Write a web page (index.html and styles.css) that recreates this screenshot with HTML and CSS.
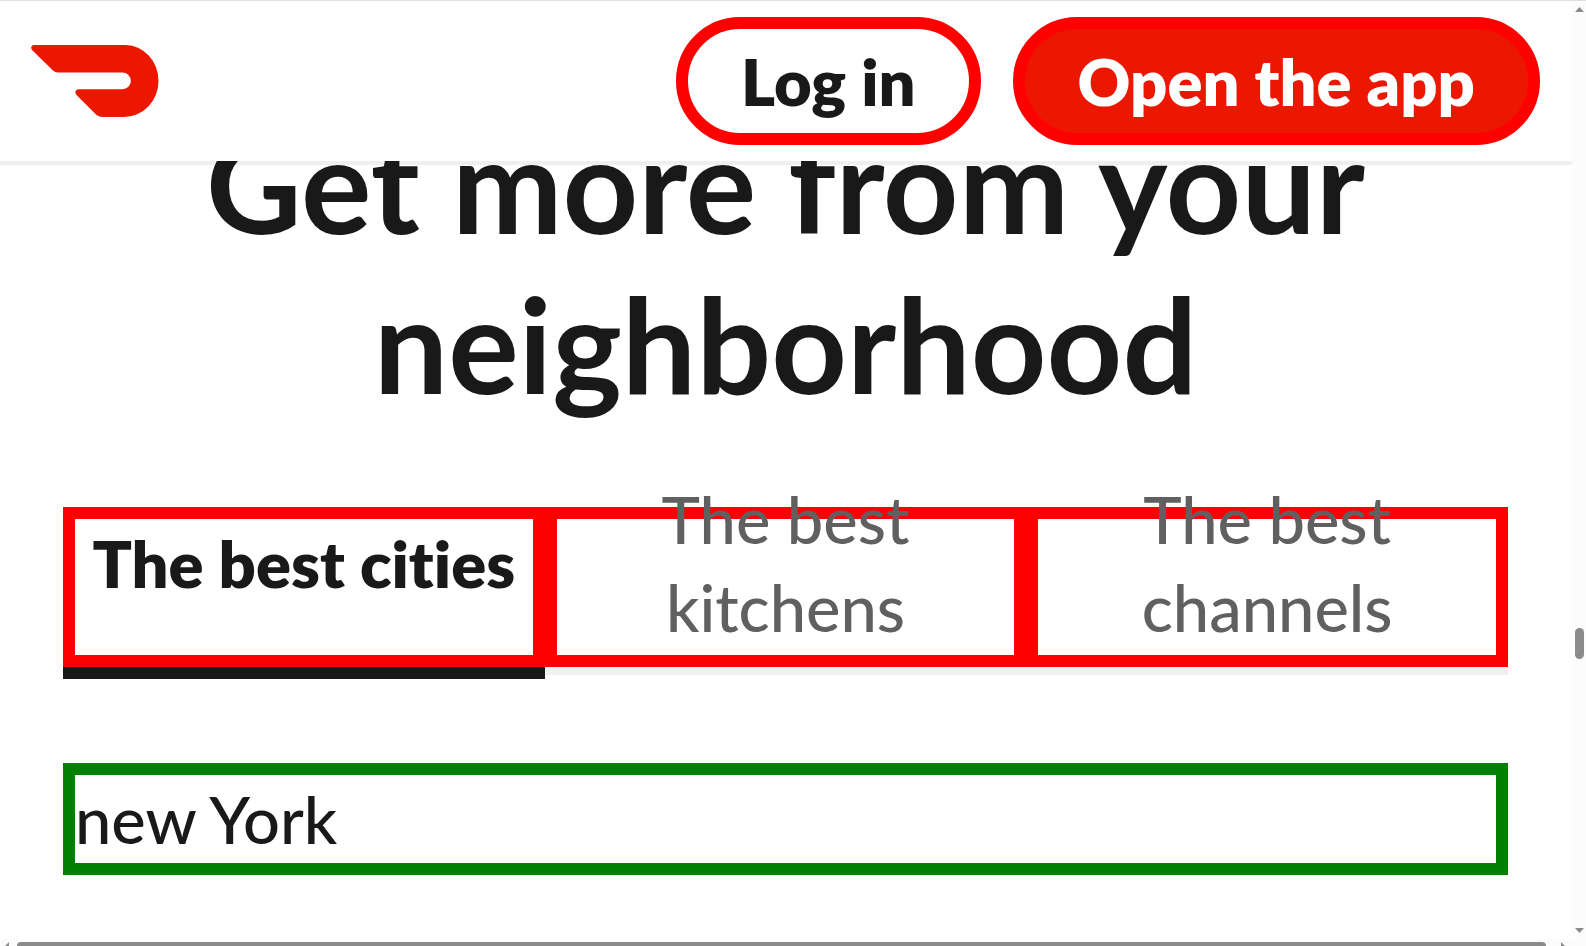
FILE: index.html
```html
<!DOCTYPE html>
<html lang="en">
<head>
<meta charset="utf-8">
<title>Get more from your neighborhood</title>
<link rel="stylesheet" href="styles.css">
</head>
<body>
<div class="window">
  <div class="page">
    <header class="header">
      <a class="logo" href="#" aria-label="Home">
        <svg viewBox="0 0 128 72" aria-hidden="true"><path d="M3 0H95A33 36 0 0 1 127.500 36A34.500 36 0 0 1 93 72H72Q68 72 65.500 70L45.500 50Q43.500 47.500 45 45.500Q46 44.300 48 44.300H91.500A8.200 8.200 0 0 0 91.500 27.600H27Q24 27.600 22 25.500L1 5Q-.5 3 .8 1Q1.500 0 3 0Z"/></svg>
      </a>
      <nav class="actions">
        <button class="pill" type="button">Log in</button>
        <button class="pill pill-primary" type="button">Open the app</button>
      </nav>
    </header>
    <main class="content">
      <h1 class="title">Get more from your neighborhood</h1>
      <div class="tabs" role="tablist">
        <button class="tab tab-active" type="button" role="tab" aria-selected="true"><span>The best cities</span></button>
        <button class="tab" type="button" role="tab" aria-selected="false"><span>The best kitchens</span></button>
        <button class="tab" type="button" role="tab" aria-selected="false"><span>The best channels</span></button>
      </div>
      <a class="city" href="#">new York</a>
    </main>
  </div>
  <div class="scroll-y" aria-hidden="true">
    <svg class="arrow-y" viewBox="0 0 9 5"><path d="M0 5L4.500 0L9 5Z"/></svg>
    <div class="thumb-y"></div>
    <svg class="arrow-y" viewBox="0 0 9 5"><path d="M0 0L4.500 5L9 0Z"/></svg>
  </div>
  <div class="scroll-x" aria-hidden="true">
    <svg class="arrow-x" viewBox="0 0 4 4"><path d="M4 0V4H0Z"/></svg>
    <div class="thumb-x"></div>
    <svg class="arrow-x" viewBox="0 0 4 4"><path d="M0 0V4H4Z"/></svg>
  </div>
</div>
</body>
</html>
```
FILE: styles.css
```css
* { box-sizing: border-box; }

body {
  margin: 0;
  background: #fff;
  color: #191919;
  font-family: Lato, "Open Sans", sans-serif;
  font-size: 65px;
  font-weight: 500;
  font-variant-ligatures: none;
  line-height: 88px;
}

button {
  margin: 0;
  color: inherit;
  font: inherit;
  font-variant-ligatures: none;
  cursor: pointer;
}

a { color: inherit; text-decoration: none; }

.window {
  display: grid;
  grid-template-columns: minmax(0, 1fr) 14px;
  grid-template-rows: minmax(0, 1fr) 7px;
  height: 100vh;
  border-top: 1px solid #e0e0e0;
  overflow: hidden;
}

.page { overflow: hidden; }

.header {
  position: relative;
  z-index: 1;
  display: flex;
  align-items: center;
  justify-content: space-between;
  padding: 16px 32px 16px 31px;
  background: #fff;
  box-shadow: 0 4px 0 rgba(25, 25, 25, 0.07);
}

.logo { display: flex; }
.logo svg { width: 128px; height: 72px; fill: #eb1700; }

.actions { display: flex; gap: 32px; }

.pill {
  padding: 8px 53px;
  border: 12px solid #f00;
  border-radius: 64px;
  background: #fff;
  font-weight: 800;
  white-space: nowrap;
}

.pill-primary { background: #eb1700; color: #fff; }

.content {
  padding: 0 64px 0 63px;
  margin-top: -58px;
}

.title {
  margin: 0 0 84px;
  font-size: 132px;
  font-weight: 700;
  line-height: 160px;
  text-align: center;
}

.tabs {
  display: grid;
  grid-template-columns: repeat(3, minmax(0, 1fr));
  box-shadow: 0 8px 0 #f0f0f0;
}

.tab {
  display: flex;
  align-items: center;
  justify-content: center;
  height: 160px;
  padding: 0 8px 48px;
  border: 12px solid #f00;
  background: transparent;
  color: #606060;
}

.tab-active {
  box-shadow: 0 12px 0 #191919;
  color: #191919;
  font-weight: 800;
}

.city {
  display: block;
  margin-top: 96px;
  border: 12px solid #008000;
}

.scroll-y {
  display: flex;
  flex-direction: column;
  align-items: center;
  padding: 6px 0;
  background: #fcfcfc;
}

.thumb-y {
  width: 9px;
  height: 31px;
  margin-top: 616px;
  margin-bottom: auto;
  border-radius: 5px;
  background: #8b8b8b;
}

.arrow-y { width: 9px; height: 5px; fill: #8b8b8b; }

.scroll-x {
  grid-column: 1 / -1;
  display: flex;
  gap: 8px;
  padding: 3px 21px 0 5px;
  background: #fcfcfc;
}

.thumb-x {
  flex: 1;
  margin-right: 7px;
  border-radius: 4px 4px 0 0;
  background: #8b8b8b;
}

.arrow-x { width: 4px; height: 4px; fill: #8b8b8b; }
```
